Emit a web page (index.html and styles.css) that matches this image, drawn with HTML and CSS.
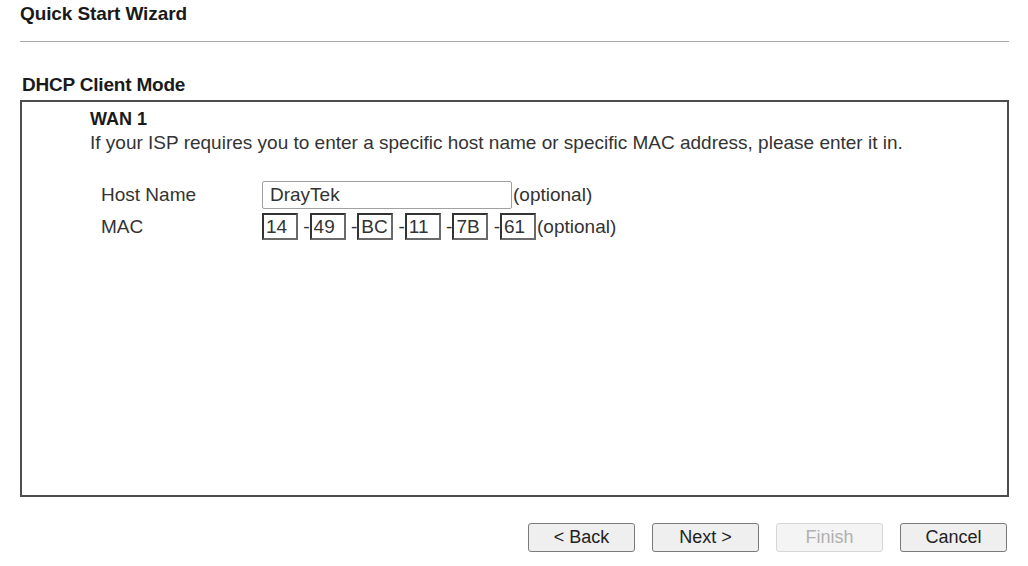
FILE: index.html
```html
<!DOCTYPE html>
<html>
<head>
<meta charset="utf-8">
<link rel="stylesheet" href="styles.css">
</head>
<body>
<div class="page">
  <div class="title">Quick Start Wizard</div>
  <hr class="rule">
  <div class="section-title">DHCP Client Mode</div>
  <div class="panel">
    <div class="wan">WAN 1</div>
    <div class="desc">If your ISP requires you to enter a specific host name or specific MAC address, please enter it in.</div>
    <div class="form">
      <div class="row">
        <div class="label">Host Name</div>
        <div class="field"><input class="host" type="text" value="DrayTek"><span class="opt">(optional)</span></div>
      </div>
      <div class="row row-mac">
        <div class="label">MAC</div>
        <div class="field"><input class="mac" type="text" value="14"><span class="dash"> -</span><input class="mac" type="text" value="49"><span class="dash"> -</span><input class="mac" type="text" value="BC"><span class="dash"> -</span><input class="mac" type="text" value="11"><span class="dash"> -</span><input class="mac" type="text" value="7B"><span class="dash"> -</span><input class="mac" type="text" value="61"><span class="opt">(optional)</span></div>
      </div>
    </div>
  </div>
  <div class="buttons">
    <button class="btn">&lt; Back</button>
    <button class="btn">Next &gt;</button>
    <button class="btn" disabled>Finish</button>
    <button class="btn">Cancel</button>
  </div>
</div>
</body>
</html>
```
FILE: styles.css
```css
html, body {
  margin: 0;
  padding: 0;
  background: #ffffff;
}
body {
  font-family: "Liberation Sans", Arial, sans-serif;
  color: #222;
}
.page {
  width: 989px;
  margin-left: 20px;
  padding-top: 3px;
}
.title {
  font-weight: bold;
  font-size: 19px;
  line-height: 22px;
  color: #1a1a1a;
  letter-spacing: -0.1px;
}
.rule {
  margin: 16px 0 0 0;
  border: 0;
  height: 1px;
  background: #a8a8a8;
}
.section-title {
  margin-top: 32px;
  font-weight: bold;
  font-size: 19px;
  line-height: 22px;
  color: #1a1a1a;
  padding-left: 2px;
  letter-spacing: -0.2px;
}
.panel {
  margin-top: 4px;
  box-sizing: border-box;
  height: 397px;
  border: 2px solid #4d4d4d;
  padding: 6px 0 0 68px;
}
.wan {
  font-weight: bold;
  font-size: 18px;
  line-height: 22px;
  color: #1a1a1a;
}
.desc {
  margin-top: 2px;
  font-size: 19px;
  line-height: 22px;
  color: #333;
}
.form {
  margin-top: 27px;
  margin-left: 11px;
  display: flex;
  flex-direction: column;
  gap: 4px;
}
.row {
  display: flex;
  align-items: center;
}
.label {
  width: 161px;
  font-size: 19px;
  line-height: 22px;
  color: #333;
}
.field {
  display: flex;
  align-items: center;
  font-size: 19px;
  color: #333;
}
.host {
  box-sizing: border-box;
  width: 250px;
  height: 28px;
  margin: 0;
  padding: 0 7px;
  border: 1px solid #a0a0a0;
  border-radius: 2px;
  font-family: "Liberation Sans", Arial, sans-serif;
  font-size: 19px;
  color: #333;
  background: #fff;
}
.mac {
  box-sizing: border-box;
  width: 36px;
  height: 27px;
  margin: 0;
  padding: 0 2px;
  border-style: solid;
  border-width: 2px;
  border-color: #333 #6a6a6a #6a6a6a #333;
  font-family: "Liberation Sans", Arial, sans-serif;
  font-size: 19px;
  color: #333;
  background: #fff;
}
.dash {
  white-space: pre;
}
.opt {
  white-space: pre;
  margin-left: 1px;
}
.buttons {
  margin-top: 26px;
  padding-right: 2px;
  display: flex;
  justify-content: flex-end;
  gap: 17px;
}
.btn {
  box-sizing: border-box;
  width: 107px;
  height: 29px;
  margin: 0;
  padding: 0;
  border: 1px solid #7a7a7a;
  border-radius: 3px;
  background: #efefef;
  font-family: "Liberation Sans", Arial, sans-serif;
  font-size: 18px;
  color: #222;
}
.btn:disabled {
  border-color: #d6d6d6;
  background: #f4f4f4;
  color: #b0b0b0;
}
```
